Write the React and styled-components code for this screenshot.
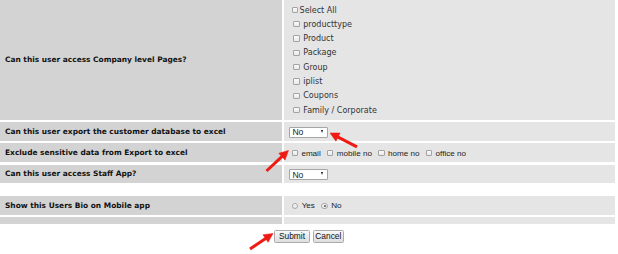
import React from "react";
import styled, { createGlobalStyle } from "styled-components";

const GlobalStyle = createGlobalStyle`
  html, body { margin: 0; padding: 0; background: #ffffff; }
  body { font-family: "DejaVu Sans", Verdana, sans-serif; }
`;

const Page = styled.div`
  position: relative;
  width: 618px;
  height: 254px;
  overflow: hidden;
  background: #ffffff;
`;

const FormGrid = styled.div`
  display: grid;
  grid-template-columns: 282px 331px;
  column-gap: 2px;
  row-gap: 2.4px;
`;

const LabelCell = styled.div`
  height: ${(p) => p.$h}px;
  background: ${(p) => (p.$blank ? "transparent" : "#d3d3d3")};
  display: flex;
  align-items: center;
  padding-left: 5px;
  font-family: "DejaVu Sans", Verdana, sans-serif;
  font-weight: bold;
  font-size: 7.45px;
  color: #111111;
  white-space: nowrap;
  box-sizing: border-box;
`;

const FieldCell = styled.div`
  height: ${(p) => p.$h}px;
  background: ${(p) => (p.$blank ? "transparent" : "#e5e5e5")};
  display: flex;
  align-items: center;
  padding-left: ${(p) => p.$pad ?? 5}px;
  box-sizing: border-box;
  font-family: "Liberation Sans", Arial, sans-serif;
  font-size: 8.1px;
  color: #222222;
  white-space: nowrap;
`;

const CheckList = styled.div`
  align-self: flex-start;
  display: flex;
  flex-direction: column;
  padding-top: 2.9px;
  font-family: "DejaVu Sans", Verdana, sans-serif;
  font-size: 8px;
  color: #333333;
`;

const CheckLine = styled.div`
  height: 14.3px;
  display: flex;
  align-items: center;
  padding-left: ${(p) => (p.$all ? 7.7 : 9.3)}px;
  gap: ${(p) => (p.$all ? 1.6 : 3.7)}px;
`;

const Box = styled.span`
  display: inline-block;
  width: 6.3px;
  height: 6.3px;
  box-sizing: border-box;
  border: 1px solid #a3a3a3;
  border-radius: 1px;
  background: linear-gradient(#fbfbfb, #e9e9e9);
  flex: none;
`;

const InlineOptions = styled.div`
  display: flex;
  align-items: center;
  padding-left: 2.7px;
  padding-top: 1px;
`;

const Option = styled.label`
  display: flex;
  align-items: center;
  gap: 3.4px;
  margin-right: 6.4px;
`;

const Select = styled.div`
  width: 39px;
  height: 11.4px;
  margin-top: 1.4px;
  box-sizing: border-box;
  border: 1px solid #a6a6a6;
  border-radius: 1px;
  background: #ffffff;
  display: flex;
  align-items: center;
  justify-content: space-between;
  padding: 0 4px 0 2.4px;
  font-family: "Liberation Sans", Arial, sans-serif;
  font-size: 8.6px;
  color: #222222;
`;

const Caret = styled.span`
  width: 0;
  height: 0;
  margin-top: -2px;
  border-left: 1.8px solid transparent;
  border-right: 1.8px solid transparent;
  border-top: 3.6px solid #111111;
`;

const Radio = styled.span`
  position: relative;
  display: inline-block;
  width: 6.6px;
  height: 6.6px;
  box-sizing: border-box;
  border: 1px solid #a8a8a8;
  border-radius: 50%;
  background: linear-gradient(#fafafa, #e6e6e6);
  flex: none;
  &::after {
    content: "";
    display: ${(p) => (p.$checked ? "block" : "none")};
    position: absolute;
    left: 1.3px;
    top: 1.3px;
    width: 2px;
    height: 2px;
    border-radius: 50%;
    background: #555555;
  }
`;

const ButtonBar = styled.div`
  display: flex;
  justify-content: center;
  gap: 2.7px;
  margin-top: 5.8px;
`;

const Button = styled.button`
  width: ${(p) => p.$w}px;
  height: 13.4px;
  padding: 0;
  box-sizing: border-box;
  border: 1px solid #aaaaaa;
  border-radius: 1.5px;
  background: linear-gradient(#f8f8f8, #dddddd);
  font-family: "Liberation Sans", Arial, sans-serif;
  font-size: 8.4px;
  color: #111111;
  line-height: 1;
`;

const Overlay = styled.svg`
  position: absolute;
  left: 0;
  top: 0;
  pointer-events: none;
`;

function Arrow({ x1, y1, x2, y2 }) {
  const dx = x2 - x1;
  const dy = y2 - y1;
  const len = Math.hypot(dx, dy);
  const ux = dx / len;
  const uy = dy / len;
  const headLen = 9;
  const headHalf = 4.6;
  const bx = x2 - ux * headLen;
  const by = y2 - uy * headLen;
  const px = -uy;
  const py = ux;
  const pts = `${x2},${y2} ${bx + px * headHalf},${by + py * headHalf} ${bx - px * headHalf},${by - py * headHalf}`;
  return (
    <g fill="#ee1b14" stroke="#ee1b14">
      <line x1={x1} y1={y1} x2={bx + ux} y2={by + uy} strokeWidth="3" strokeLinecap="butt" />
      <polygon points={pts} strokeWidth="0.5" strokeLinejoin="round" />
    </g>
  );
}

const pages = ["producttype", "Product", "Package", "Group", "iplist", "Coupons", "Family / Corporate"];

export default function App() {
  return (
    <Page>
      <GlobalStyle />
      <FormGrid>
        <LabelCell $h={119.8}>Can this user access Company level Pages?</LabelCell>
        <FieldCell $h={119.8} $pad={0}>
          <CheckList>
            <CheckLine $all>
              <Box />
              <span>Select All</span>
            </CheckLine>
            {pages.map((p) => (
              <CheckLine key={p}>
                <Box />
                <span>{p}</span>
              </CheckLine>
            ))}
          </CheckList>
        </FieldCell>

        <LabelCell $h={18.8}>Can this user export the customer database to excel</LabelCell>
        <FieldCell $h={18.8}>
          <Select>
            <span>No</span>
            <Caret />
          </Select>
        </FieldCell>

        <LabelCell $h={18.8}>Exclude sensitive data from Export to excel</LabelCell>
        <FieldCell $h={18.8}>
          <InlineOptions>
            {["email", "mobile no", "home no", "office no"].map((o) => (
              <Option key={o}>
                <Box />
                <span>{o}</span>
              </Option>
            ))}
          </InlineOptions>
        </FieldCell>

        <LabelCell $h={18.8}>Can this user access Staff App?</LabelCell>
        <FieldCell $h={18.8}>
          <Select>
            <span>No</span>
            <Caret />
          </Select>
        </FieldCell>

        <LabelCell $h={7.8} $blank />
        <FieldCell $h={7.8} $blank />

        <LabelCell $h={18.8}>Show this Users Bio on Mobile app</LabelCell>
        <FieldCell $h={18.8}>
          <InlineOptions>
            <Option>
              <Radio />
              <span>Yes</span>
            </Option>
            <Option>
              <Radio $checked />
              <span>No</span>
            </Option>
          </InlineOptions>
        </FieldCell>

        <LabelCell $h={7} />
        <FieldCell $h={7} />
      </FormGrid>

      <ButtonBar>
        <Button $w={36}>Submit</Button>
        <Button $w={31.3}>Cancel</Button>
      </ButtonBar>

      <Overlay width="618" height="254" viewBox="0 0 618 254">
        <Arrow x1={357} y1={146.8} x2={330} y2={133} />
        <Arrow x1={266.5} y1={171} x2={288.5} y2={150.5} />
        <Arrow x1={250} y1={249} x2={273} y2={233.5} />
      </Overlay>
    </Page>
  );
}
